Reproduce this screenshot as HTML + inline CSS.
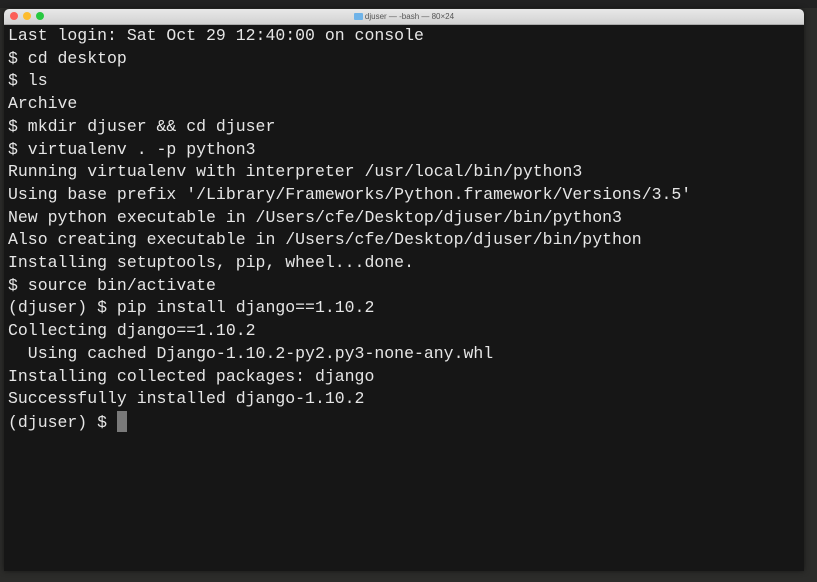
<!DOCTYPE html>
<html><head><style>
html,body{margin:0;padding:0;width:817px;height:582px;background:#2c2c2a;overflow:hidden}
.top{position:absolute;left:0;top:0;width:817px;height:8px;background:#222}
.win{position:absolute;left:4px;top:9px;width:800px;height:562px;background:#161616;border-radius:5px 5px 0 0;overflow:hidden;box-shadow:0 0 6px rgba(0,0,0,.5)}
.title{height:15px;background:linear-gradient(#e8e8e8,#d2d2d2);border-bottom:1px solid #aaa;position:relative;font:8px "Liberation Sans",sans-serif;color:#555;text-align:center;line-height:15px}
.d{position:absolute;top:3px;width:8px;height:8px;border-radius:50%}
pre{margin:0;position:absolute;left:4px;top:16px;font:16.5px/22.7px "Liberation Mono",monospace;color:#e6e6e6}
.cur{display:inline-block;width:10px;height:21px;background:#7a7a7a;vertical-align:-5px}
.fold{display:inline-block;width:9px;height:7px;background:#6fb3e8;vertical-align:-1px;margin-right:2px;border-radius:1px}
</style></head><body>
<div class="top"></div>
<div class="win">
<div class="title"><span class="d" style="left:6px;background:#fc5f57"></span><span class="d" style="left:19px;background:#fdbc2e"></span><span class="d" style="left:32px;background:#28c840"></span><span class="fold"></span>djuser — -bash — 80×24</div>
<pre>Last login: Sat Oct 29 12:40:00 on console
$ cd desktop
$ ls
Archive
$ mkdir djuser &amp;&amp; cd djuser
$ virtualenv . -p python3
Running virtualenv with interpreter /usr/local/bin/python3
Using base prefix '/Library/Frameworks/Python.framework/Versions/3.5'
New python executable in /Users/cfe/Desktop/djuser/bin/python3
Also creating executable in /Users/cfe/Desktop/djuser/bin/python
Installing setuptools, pip, wheel...done.
$ source bin/activate
(djuser) $ pip install django==1.10.2
Collecting django==1.10.2
  Using cached Django-1.10.2-py2.py3-none-any.whl
Installing collected packages: django
Successfully installed django-1.10.2
(djuser) $ <span class="cur"></span></pre>
</div>
</body></html>
